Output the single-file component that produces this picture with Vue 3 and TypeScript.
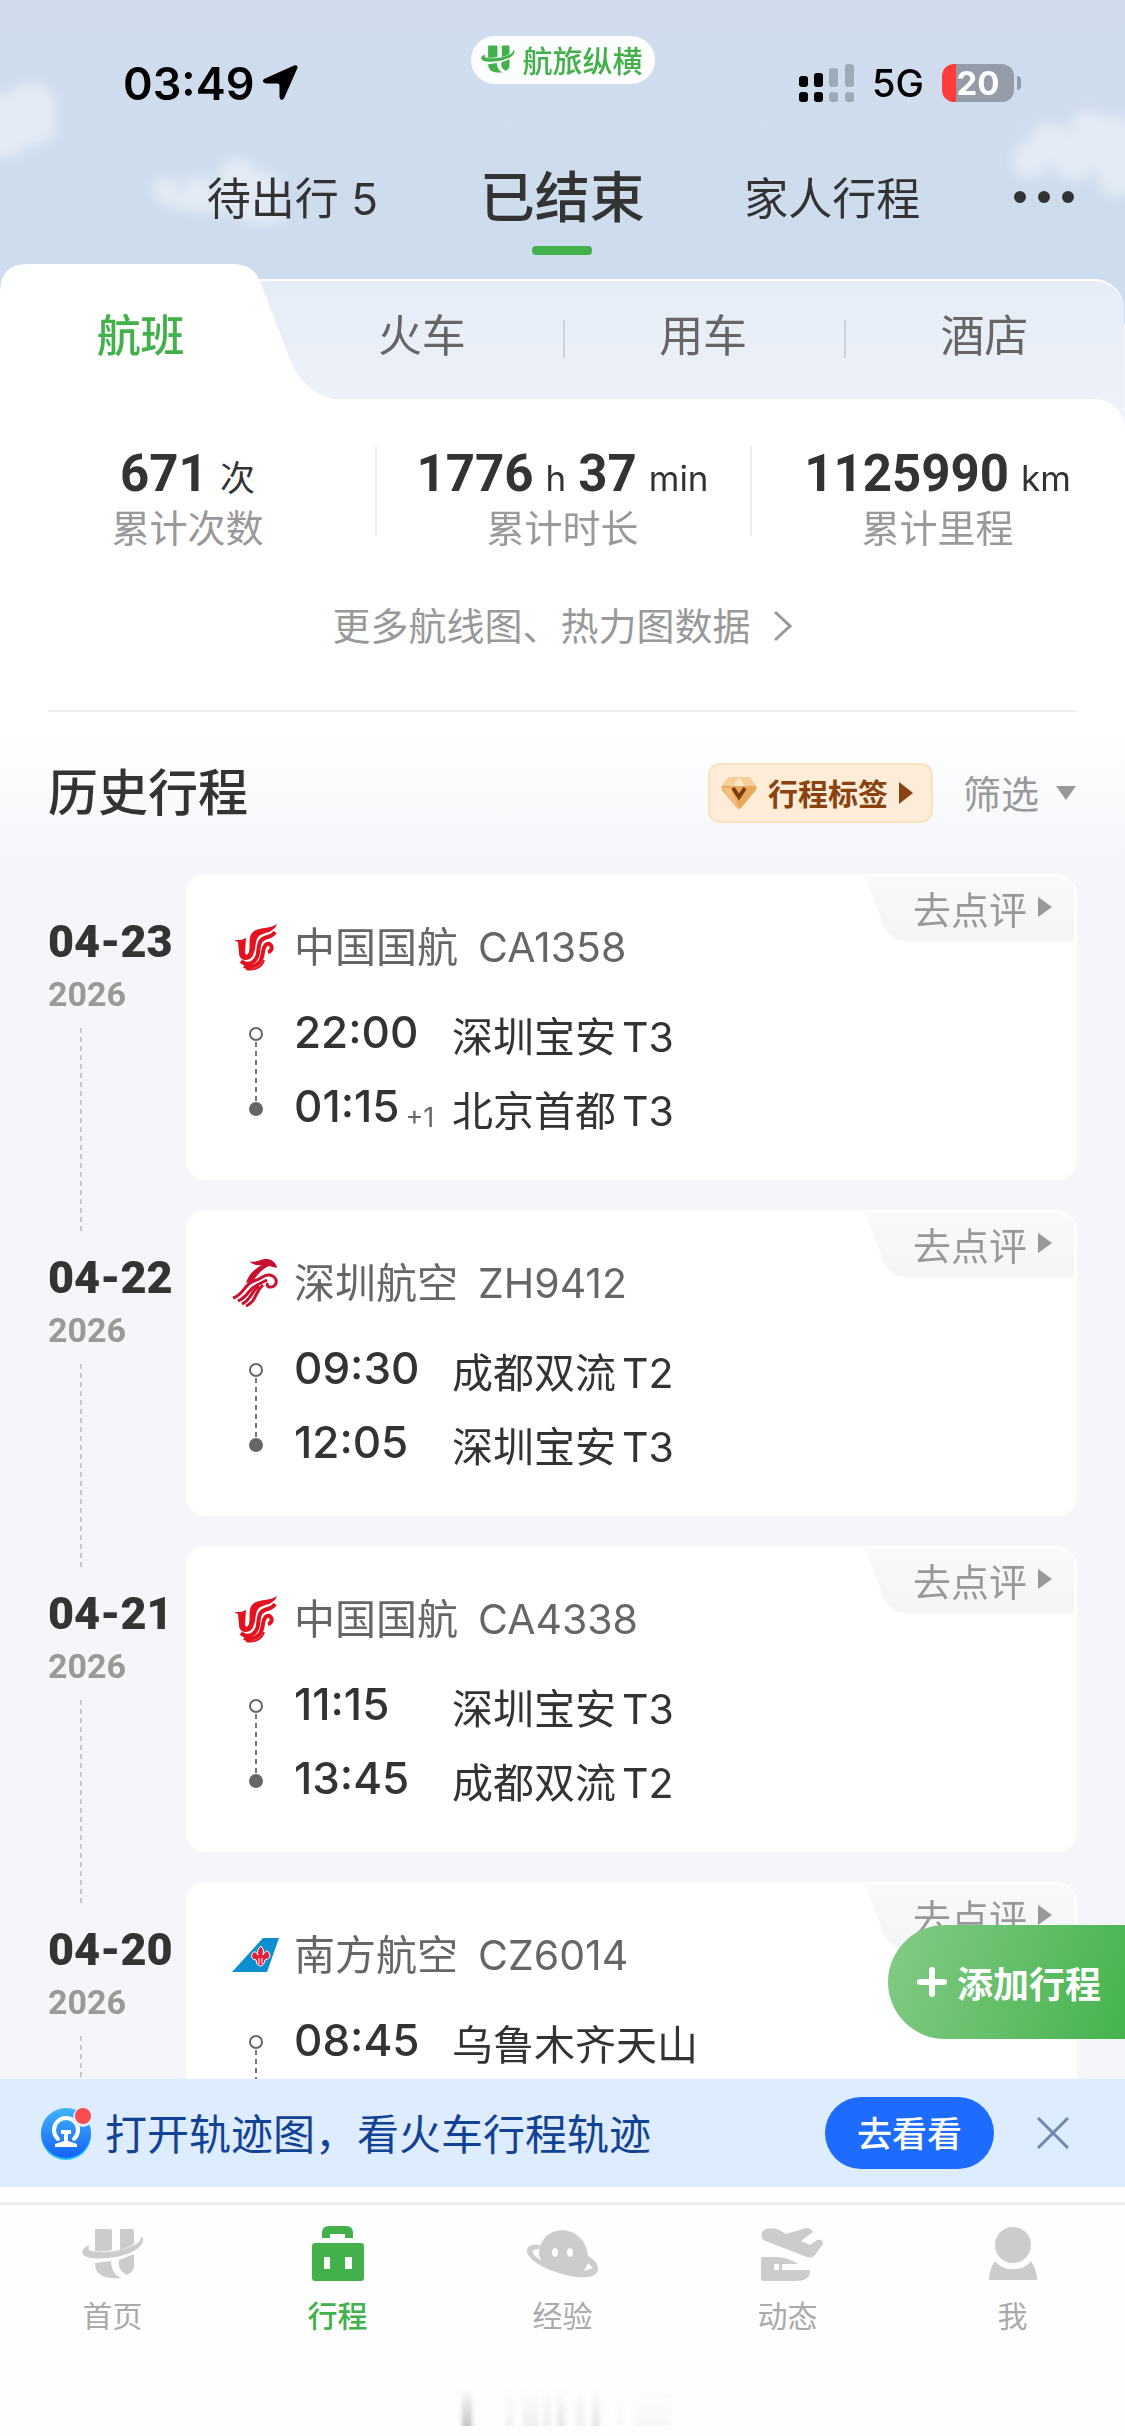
<script setup lang="ts">
interface Leg {
  time: string
  plus?: string
  place: string
  terminal?: string
}
interface Trip {
  date: string
  year: string
  logo: 'ca' | 'zh' | 'cz'
  airline: string
  flight: string
  legs: Leg[]
}

const kinds: string[] = ['航班', '火车', '用车', '酒店']

const trips: Trip[] = [
  {
    date: '04-23', year: '2026', logo: 'ca', airline: '中国国航', flight: 'CA1358',
    legs: [
      { time: '22:00', place: '深圳宝安', terminal: 'T3' },
      { time: '01:15', plus: '+1', place: '北京首都', terminal: 'T3' },
    ],
  },
  {
    date: '04-22', year: '2026', logo: 'zh', airline: '深圳航空', flight: 'ZH9412',
    legs: [
      { time: '09:30', place: '成都双流', terminal: 'T2' },
      { time: '12:05', place: '深圳宝安', terminal: 'T3' },
    ],
  },
  {
    date: '04-21', year: '2026', logo: 'ca', airline: '中国国航', flight: 'CA4338',
    legs: [
      { time: '11:15', place: '深圳宝安', terminal: 'T3' },
      { time: '13:45', place: '成都双流', terminal: 'T2' },
    ],
  },
  {
    date: '04-20', year: '2026', logo: 'cz', airline: '南方航空', flight: 'CZ6014',
    legs: [{ time: '08:45', place: '乌鲁木齐天山' }],
  },
]
</script>

<template>
  <div class="page">
    <header class="top">
      <svg class="clouds" viewBox="0 0 1125 324" preserveAspectRatio="xMidYMin slice" aria-hidden="true">
        <defs>
          <filter id="soft" x="-30%" y="-30%" width="160%" height="160%"><feGaussianBlur stdDeviation="6" /></filter>
        </defs>
        <g fill="#fff" filter="url(#soft)">
          <g opacity=".42">
            <circle cx="32" cy="106" r="24" /><circle cx="10" cy="120" r="28" /><circle cx="36" cy="126" r="20" />
            <ellipse cx="0" cy="146" rx="26" ry="12" />
          </g>
          <g opacity=".42">
            <circle cx="166" cy="190" r="13" /><circle cx="198" cy="192" r="16" /><circle cx="238" cy="178" r="20" />
            <circle cx="264" cy="190" r="18" /><ellipse cx="216" cy="202" rx="54" ry="10" /><ellipse cx="262" cy="216" rx="24" ry="8" />
          </g>
          <g opacity=".42">
            <circle cx="1088" cy="128" r="18" /><circle cx="1050" cy="142" r="20" /><circle cx="1112" cy="146" r="30" />
            <circle cx="1030" cy="160" r="18" /><circle cx="1074" cy="156" r="24" /><circle cx="1118" cy="176" r="20" />
          </g>
        </g>
      </svg>

      <div class="status">
        <div class="clock">
          <span>03:49</span>
          <svg width="36" height="36" viewBox="0 0 36 36" aria-hidden="true">
            <path d="M32 .6Q36 -.6 35.400 3L22 33.500Q18.500 37 17.500 32V20.500Q17.400 18.500 15.500 18.500H4Q-1 17.500 2 14Z" fill="#000" />
          </svg>
        </div>
        <div class="brand">
          <svg width="34" height="28" viewBox="0 0 62 51" fill="#43b14b" aria-hidden="true">
            <path d="M13 1h15q2 0 2 2v19q-8 2-17 1zM38 1h12q2 0 2 2v13q-6 4-14 6z" />
            <path d="M8 17C-2 20-3 29 10 30C30 32 58 26 61 13Q62 10 59 9Q59 15 50 18C38 24 20 25 10 23Q4 21 8 17Z" />
            <path d="M13 35l16-2C29 42 34 49 40 50C26 51 13 49 13 35ZM37 32l15-6v12q0 6-7 9C39 44 36 40 37 32Z" />
          </svg>
          <span>航旅纵横</span>
        </div>
        <div class="signal">
          <svg width="55" height="38" viewBox="0 0 55 38" aria-hidden="true">
            <rect x="0" y="12" width="9" height="11" rx="3" /><rect x="15" y="9" width="9" height="14" rx="3" />
            <rect x="0" y="28" width="9" height="10" rx="3" /><rect x="15" y="28" width="9" height="10" rx="3" />
            <g fill="#9faab9"><rect x="30" y="4" width="9" height="19" rx="3" /><rect x="46" y="0" width="9" height="23" rx="3" />
              <rect x="30" y="28" width="9" height="10" rx="3" /><rect x="46" y="28" width="9" height="10" rx="3" /></g>
          </svg>
          <span class="net">5G</span>
          <span class="battery">20</span>
        </div>
      </div>

      <nav class="nav">
        <a href="#upcoming">待出行 5</a>
        <a href="#done" class="on">已结束</a>
        <a href="#family">家人行程</a>
        <button type="button" class="dots" aria-label="更多">
          <svg width="62" height="14" viewBox="0 0 62 14" fill="#333"><circle cx="7" cy="7" r="6" /><circle cx="31" cy="7" r="6" /><circle cx="55" cy="7" r="6" /></svg>
        </button>
      </nav>
    </header>

    <main class="sheet">
      <div class="kinds">
        <svg class="bump" viewBox="0 0 345 135" preserveAspectRatio="none" aria-hidden="true">
          <path d="M0 136V28Q0 0 28 0H234Q253 0 260 18L289 93Q306 135 345 135V136Z" fill="#fff" />
        </svg>
        <button v-for="(k, i) in kinds" :key="k" type="button" :class="{ on: i === 0, bar: i > 1 }">{{ k }}</button>
      </div>

      <div class="body">
        <section class="stats">
          <div class="stat"><p><b>671</b><span>次</span></p><small>累计次数</small></div>
          <div class="stat"><p><b>1776</b><span>h</span><b>37</b><span>min</span></p><small>累计时长</small></div>
          <div class="stat"><p><b>1125990</b><span>km</span></p><small>累计里程</small></div>
        </section>
        <a href="#map" class="more">
          更多航线图、热力图数据
          <svg width="20" height="32" viewBox="0 0 20 32" fill="none" stroke="#999" stroke-width="3"><path d="M2 2l15 14L2 30" /></svg>
        </a>

        <div class="head">
          <h2>历史行程</h2>
          <button type="button" class="tag">
            <svg width="36" height="34" viewBox="0 0 36 34" aria-hidden="true">
              <path d="M8 1H28L35 10Q36 12 35 14L20 32Q18 34 16 32L1 14Q0 12 1 10Z" fill="#e9a85a" />
              <path d="M8 1H28L35 10H1Z" fill="#f6cf98" /><path d="M12 10L18 1l6 9z" fill="#fde6c4" />
              <path d="M1 12L10 12L18 33L16 32Z" fill="#f3bf7c" />
              <path d="M12 12l6 9 6-9" fill="none" stroke="#7a3c10" stroke-width="4" />
            </svg>
            <span>行程标签</span>
            <svg width="14" height="22" viewBox="0 0 14 22" aria-hidden="true"><path d="M0 0L14 11L0 22Z" fill="#8a4310" /></svg>
          </button>
          <button type="button" class="filter">
            <span>筛选</span>
            <svg width="22" height="14" viewBox="0 0 22 14" aria-hidden="true"><path d="M1 0H21L11 14Z" fill="#999" /></svg>
          </button>
        </div>
      </div>

      <section class="list">
        <article v-for="t in trips" :key="t.date" class="trip">
          <div class="when">
            <strong>{{ t.date }}</strong>
            <span>{{ t.year }}</span>
            <i></i>
          </div>
          <div class="card">
            <a href="#review" class="review">
              <svg viewBox="0 0 212 64" aria-hidden="true">
                <defs><linearGradient id="rv" x1="0" y1="0" x2="0" y2="1"><stop offset="0" stop-color="#f8f9fb" /><stop offset="1" stop-color="#f4f5f7" /></linearGradient></defs>
                <path d="M0 0H198Q212 0 212 14V64H44Q29 64 21 48L8 12Q5 3 0 0Z" fill="url(#rv)" />
              </svg>
              <span>去点评</span>
              <svg class="arrow" width="14" height="20" viewBox="0 0 14 20" aria-hidden="true"><path d="M0 0L14 10L0 20Z" fill="#999" /></svg>
            </a>

            <div class="airline">
              <svg v-if="t.logo === 'ca'" width="48" height="48" viewBox="0 0 48 48" fill="none" stroke="#e0131f" aria-hidden="true">
                <path d="M45 1C42 10 32 9 27 13C22 18 25 26 20 34C16 39 7 38 7 30L6 19L2 17L9 17L14 15L13 30Q15 34 17 29C19 20 15 14 22 8C29 4 38 6 45 1Z" fill="#e0131f" stroke="none" />
                <path d="M43 9C39 16 32 12 28 19C25 27 28 34 21 39C17 42 12 41 9 38" stroke-width="4" />
                <path d="M36 29C42 28 40 19 35 21C29 24 33 33 27 40C23 44 16 45 12 43" stroke-width="4" />
                <path d="M32 37C30 44 23 48 14 46" stroke-width="2" />
              </svg>
              <svg v-else-if="t.logo === 'zh'" width="48" height="48" viewBox="0 0 48 48" aria-hidden="true">
                <path d="M17 2C24 5 28-1 36 0Q44 2 45 9L37 7C30 10 26 15 21 22L14 24C17 14 24 9 30 6C24 7 20 5 17 2Z" fill="#c8102e" />
                <g fill="none" stroke="#c8102e" stroke-width="3">
                  <path d="M1 39C12 36 12 25 22 22C30 20 31 15 38 16C47 18 46 29 37 28Q34 27 36 24" />
                  <path d="M6 42C17 37 16 30 25 26L35 21" /><path d="M10 45C20 40 19 32 27 27" /><path d="M14 47C25 42 22 34 31 26" />
                </g>
              </svg>
              <svg v-else width="48" height="48" viewBox="0 0 48 48" aria-hidden="true">
                <path d="M0 41L31 7H47L35 41Z" fill="#0b8fd0" />
                <g fill="#e2203a" stroke="#fff" stroke-width="1">
                  <path d="M29 15Q33 19 31 24Q35 17 37 22Q40 27 33 29Q32 35 28 35Q24 34 24 29Q18 28 20 23Q23 18 26 24Q24 19 29 15Z" />
                </g>
                <path d="M27 27V33M30 27V33" stroke="#fff" stroke-width="1" />
              </svg>
              <span>{{ t.airline }}</span>
              <span class="flight">{{ t.flight }}</span>
            </div>

            <div class="route">
              <svg width="48" height="148" viewBox="0 0 48 148" aria-hidden="true">
                <circle cx="24" cy="34" r="6" fill="none" stroke="#666" stroke-width="2" />
                <path d="M24 42V102" stroke="#777" stroke-width="2" stroke-dasharray="5 4" />
                <circle cx="24" cy="109" r="7" fill="#666" />
              </svg>
              <div class="legs">
                <div v-for="l in t.legs" :key="l.time" class="leg">
                  <time>{{ l.time }}<sub v-if="l.plus">{{ l.plus }}</sub></time>
                  <span class="place">{{ l.place }}</span>
                  <span v-if="l.terminal">{{ l.terminal }}</span>
                </div>
              </div>
            </div>
          </div>
        </article>
        <button type="button" class="add">
          <svg width="30" height="30" viewBox="0 0 30 30" aria-hidden="true"><path d="M15 3V27M3 15H27" stroke="#fff" stroke-width="6" stroke-linecap="round" /></svg>
          添加行程
        </button>
      </section>
    </main>

    <aside class="banner">
      <svg width="56" height="56" viewBox="0 0 56 56" aria-hidden="true">
        <defs><linearGradient id="bl" x1="0" y1="0" x2="0" y2="1"><stop offset="0" stop-color="#41b4fb" /><stop offset="1" stop-color="#1561f8" /></linearGradient></defs>
        <circle cx="26" cy="30" r="25" fill="#1fc4fb" /><circle cx="26" cy="28" r="25" fill="url(#bl)" />
        <path d="M18 34A12 12 0 1 1 34 34" fill="none" stroke="#fff" stroke-width="4" stroke-linecap="round" />
        <path d="M24 14V11H28V14ZM21 25H31V29H28V36L37 39V42H15V39L24 36V29H21Z" fill="#fff" />
        <circle cx="43" cy="12" r="10" fill="#deecff" /><circle cx="43" cy="11" r="8" fill="#f74d50" />
      </svg>
      <p>打开轨迹图，看火车行程轨迹</p>
      <button type="button" class="go">去看看</button>
      <button type="button" class="close" aria-label="关闭">
        <svg width="32" height="32" viewBox="0 0 32 32" stroke="#6d88b0" stroke-width="3"><path d="M1 1L31 31M31 1L1 31" /></svg>
      </button>
    </aside>

    <footer class="tabs">
      <nav>
        <a href="#home">
          <svg width="62" height="56" viewBox="0 -2 62 56" aria-hidden="true">
            <path d="M13 1h15q2 0 2 2v19q-8 2-17 1zM38 1h12q2 0 2 2v13q-6 4-14 6z" />
            <path d="M8 17C-2 20-3 29 10 30C30 32 58 26 61 13Q62 10 59 9Q59 15 50 18C38 24 20 25 10 23Q4 21 8 17Z" />
            <path d="M13 35l16-2C29 42 34 49 40 50C26 51 13 49 13 35ZM37 32l15-6v12q0 6-7 9C39 44 36 40 37 32Z" />
          </svg>
          首页
        </a>
        <a href="#trips" class="on">
          <svg width="52" height="56" viewBox="0 0 52 56" fill-rule="evenodd" aria-hidden="true">
            <path d="M10 12V7Q10 0 17 0H34Q41 0 41 7V12H33V8H18V12ZM3 17H49Q52 17 52 20V52Q52 55 49 55H3Q0 55 0 52V20Q0 17 3 17ZM12 31V43H18V31ZM33 31V43H40V31Z" />
          </svg>
          行程
        </a>
        <a href="#tips">
          <svg width="72" height="56" viewBox="0 -4 72 56" fill-rule="evenodd" aria-hidden="true">
            <path d="M12 25C12-8 58-8 61 26C66 29 71 33 71 39C71 46 62 48 50 47C30 45 0 32 0 21C0 15 6 14 13 15L12 19C6 19 4 21 7 25L14 31ZM28 18C24 18 24 27 28 27S32 18 28 18ZM43 18C39 18 39 27 43 27S47 18 43 18ZM57 41L66 38L61 33Z" />
          </svg>
          经验
        </a>
        <a href="#news">
          <svg width="70" height="56" viewBox="-8 -2 70 56" fill-rule="evenodd" aria-hidden="true">
            <path d="M2 12Q-2 4 5 1Q13-1 18 2L25 6L45 0Q50 0 52 4L40 13L49 17L56 12Q62 11 62 16L54 27Q51 31 46 29Z" />
            <path d="M0 31Q0 29 2 29H16Q26 29 37 36H21V42H49Q50 53 34 53H2Q0 53 0 51ZM13 36V42H18V36Z" />
          </svg>
          动态
        </a>
        <a href="#me">
          <svg width="48" height="56" viewBox="0 -1 48 56" aria-hidden="true">
            <circle cx="24" cy="18" r="18" /><path d="M6 34C14 45 34 45 42 34Q48 43 48 53H0Q0 43 6 34Z" />
          </svg>
          我
        </a>
      </nav>
      <svg class="ghost" width="220" height="40" viewBox="0 0 220 40" aria-hidden="true">
        <defs>
          <linearGradient id="fade" x1="0" y1="0" x2="0" y2="1"><stop offset="0" stop-color="#888" stop-opacity="0" /><stop offset="1" stop-color="#888" stop-opacity=".5" /></linearGradient>
          <filter id="haze" x="-10%" y="0" width="120%" height="100%"><feGaussianBlur stdDeviation="2 0" /></filter>
        </defs>
        <g fill="url(#fade)" filter="url(#haze)">
          <rect x="9" width="10" height="38" /><g opacity=".25"><rect x="54" width="6" height="38" /><rect x="70" width="16" height="38" /><rect x="90" width="8" height="38" /><rect x="122" width="9" height="38" /></g>
          <g opacity=".4"><rect x="104" width="8" height="38" /><rect x="139" width="8" height="38" /></g>
          <g opacity=".12"><rect x="164" width="7" height="38" /><rect x="182" width="8" height="38" /><rect x="190" width="28" height="38" /></g>
        </g>
      </svg>
    </footer>
  </div>
</template>

<style>
body {
  margin: 0;
}
</style>

<style scoped>
.page {
  display: flex;
  flex-direction: column;
  height: 100vh;
  overflow: hidden;
  background: #f4f6fa;
  color: #333;
  font-family: Inter, "Noto Sans CJK SC", sans-serif;
}
.page * {
  box-sizing: border-box;
}
a {
  color: inherit;
  text-decoration: none;
}
button {
  margin: 0;
  padding: 0;
  border: 0;
  background: none;
  color: inherit;
  font: inherit;
}
p,
h2 {
  margin: 0;
}
svg {
  flex: none;
  display: block;
}

/* sky header */
.top {
  position: relative;
  flex: none;
  margin-bottom: -60px;
  padding: 36px 0 60px;
  background: linear-gradient(#d0dced, #cdddee 80%, #d0dcee);
}
.clouds {
  position: absolute;
  inset: 0;
  width: 100%;
  height: 100%;
}
.status {
  position: relative;
  display: grid;
  grid-template-columns: 1fr auto 1fr;
  color: #000;
}
.clock,
.signal {
  display: flex;
  align-items: center;
  height: 94px;
}
.clock {
  padding-left: 123px;
  gap: 8px;
  font-size: 45px;
  font-weight: 600;
}
.brand {
  display: flex;
  align-items: center;
  gap: 8px;
  height: 48px;
  padding: 0 12px 2px 10px;
  border-radius: 24px;
  background: #fcfefe;
  color: #43b14b;
  font-size: 30px;
  font-weight: 500;
}
.signal {
  justify-content: flex-end;
  padding-right: 111px;
}
.net {
  margin: 0 18px;
  font-size: 38px;
  font-weight: 500;
}
.battery {
  position: relative;
  width: 72px;
  border-radius: 12px;
  background: linear-gradient(90deg, #ff3b3c 14px, #959ca9 14px);
  color: #fff;
  font-size: 33px;
  font-weight: 700;
  line-height: 38px;
  text-align: center;
}
.battery::after {
  content: "";
  position: absolute;
  top: 12px;
  right: -7px;
  width: 4px;
  height: 14px;
  border-radius: 0 4px 4px 0;
  background: #959ca9;
}
.nav {
  position: relative;
  display: grid;
  grid-template-columns: 270fr 270fr 270fr 158fr;
  align-items: center;
  height: 134px;
  padding-left: 14%;
  font-size: 44px;
  text-align: center;
}
.nav a {
  padding-bottom: 3px;
  white-space: nowrap;
}
.nav .on {
  position: relative;
  padding: 0;
  font-size: 55px;
  font-weight: 500;
  line-height: 134px;
}
.nav .on::after {
  content: "";
  position: absolute;
  bottom: 9px;
  left: calc(50% - 30px);
  width: 60px;
  height: 9px;
  border-radius: 4px;
  background: #43b14b;
}
.dots {
  display: flex;
  justify-content: center;
  padding-right: 4px;
}

/* trip kinds */
.sheet {
  position: relative;
  display: flex;
  flex: 1;
  flex-direction: column;
  min-height: 0;
}
.sheet::before {
  content: "";
  position: absolute;
  top: 15px;
  left: 0;
  right: 1px;
  height: 180px;
  border-top: 2px solid #fff;
  border-radius: 30px;
  background: linear-gradient(#e6edf6, #edf1fa 70%);
}
.kinds {
  position: relative;
  display: grid;
  grid-template-columns: repeat(4, 1fr);
  flex: none;
  height: 135px;
}
.bump {
  position: absolute;
  left: 0;
  top: 0;
  width: 30.7%;
  height: 136px;
}
.kinds button {
  position: relative;
  padding-top: 2px;
  color: #666;
  font-size: 44px;
}
.kinds .on {
  color: #43b14b;
  font-weight: 500;
}
.bar::before {
  content: "";
  position: absolute;
  left: 0;
  top: 56px;
  width: 2px;
  height: 38px;
  background: #cdd2da;
}
.body {
  position: relative;
  flex: none;
  border-radius: 0 30px 0 0;
  background: linear-gradient(#fff 330px, #f4f6fa 460px);
}

/* totals */
.stats {
  display: grid;
  grid-template-columns: repeat(3, 1fr);
  padding-top: 47px;
}
.stat {
  position: relative;
  text-align: center;
}
.stat + .stat::before {
  content: "";
  position: absolute;
  left: 0;
  top: 0;
  width: 2px;
  height: 90px;
  background: #eee;
}
.stat p {
  display: flex;
  justify-content: center;
  align-items: baseline;
  gap: 12px;
  line-height: 56px;
}
.stat b {
  font-family: Roboto, sans-serif;
  font-size: 51px;
}
.stat span {
  font-size: 35px;
}
.stat small {
  display: block;
  color: #999;
  font-size: 38px;
  line-height: 44px;
}
.more {
  display: flex;
  justify-content: center;
  align-items: center;
  gap: 22px;
  margin: 52px 48px 0;
  padding-bottom: 60px;
  border-bottom: 2px solid #efefef;
  color: #999;
  font-size: 38px;
  line-height: 48px;
}

/* history */
.head {
  display: flex;
  align-items: center;
  height: 162px;
  padding: 0 48px;
}
h2 {
  flex: 1;
  padding-bottom: 8px;
  font-size: 50px;
  font-weight: 500;
}
.tag {
  display: flex;
  align-items: center;
  gap: 11px;
  height: 60px;
  padding: 0 18px 0 11px;
  border: 2px solid #fbe2bf;
  border-radius: 12px;
  background: #fdecd7;
  color: #8a4310;
  font-size: 30px;
  font-weight: 700;
}
.tag span {
  padding-bottom: 2px;
}
.filter {
  display: flex;
  align-items: center;
  gap: 16px;
  margin-left: 30px;
  color: #999;
  font-size: 38px;
}
.filter span {
  padding-bottom: 4px;
}
.list {
  position: relative;
  flex: 1;
  min-height: 0;
  overflow: hidden;
  padding: 0 48px;
}
.trip {
  display: grid;
  grid-template-columns: 138px 1fr;
  padding-bottom: 30px;
}
.when {
  display: flex;
  flex-direction: column;
  padding-top: 42px;
  font-family: Roboto, sans-serif;
  font-weight: 700;
}
.when strong {
  font-size: 45px;
  line-height: 52px;
}
.when span {
  margin-top: 6px;
  color: #999;
  font-size: 34px;
  line-height: 40px;
}
.when i {
  flex: 1;
  width: 2px;
  margin: 14px 0 -54px 32px;
  background: repeating-linear-gradient(#c8c8c8 0 5px, transparent 5px 9px);
}
.card {
  position: relative;
  height: 306px;
  padding: 45px 0 32px 46px;
  border-radius: 20px;
  background: #fff;
}
.review {
  position: absolute;
  top: 3px;
  right: 3px;
  display: flex;
  align-items: center;
  gap: 11px;
  height: 64px;
  padding: 0 22px 4px 50px;
  color: #999;
  font-size: 38px;
}
.review svg:first-child {
  position: absolute;
  right: 0;
  top: 0;
  width: 212px;
  height: 64px;
}
.review span,
.arrow {
  position: relative;
}
.airline {
  display: flex;
  align-items: center;
  gap: 14px;
  color: #666;
  font-size: 41px;
  line-height: 56px;
}
.flight {
  margin-left: 6px;
}
.route {
  display: flex;
  gap: 14px;
  padding-top: 25px;
}
.leg {
  display: flex;
  align-items: flex-start;
  gap: 6px;
  font-size: 41px;
  line-height: 74px;
}
time {
  width: 152px;
  font-size: 44px;
  font-weight: 500;
  line-height: 64px;
  white-space: nowrap;
}
sub {
  margin-left: 6px;
  color: #666;
  font-size: 27px;
  font-weight: 400;
  line-height: 1;
  vertical-align: -5px;
}
.add {
  position: absolute;
  right: 0;
  bottom: 40px;
  display: flex;
  align-items: center;
  gap: 10px;
  height: 114px;
  padding: 0 24px 0 29px;
  border-radius: 57px 0 0 57px;
  background: linear-gradient(110deg, #85cb86, #44b34e);
  color: #fff;
  font-size: 36px;
  font-weight: 700;
}

/* banner */
.banner {
  display: flex;
  align-items: center;
  flex: none;
  height: 108px;
  margin-bottom: 15px;
  padding: 0 56px 0 40px;
  background: #deecff;
  color: #124294;
}
.banner p {
  flex: 1;
  margin-left: 9px;
  padding-bottom: 3px;
  font-size: 42px;
}
.go {
  width: 169px;
  height: 72px;
  padding-bottom: 3px;
  border-radius: 36px;
  background: #1e6bff;
  color: #fff;
  font-size: 35px;
  font-weight: 500;
}
.close {
  margin-left: 43px;
}

/* bottom tabs */
.tabs {
  flex: none;
  height: 234px;
  border-top: 3px solid #eee;
  background: #fefefe;
  box-shadow: 0 -15px #fdfdfd;
}
.tabs nav {
  display: grid;
  grid-template-columns: repeat(5, 1fr);
  padding-top: 21px;
}
.tabs a {
  display: flex;
  flex-direction: column;
  align-items: center;
  gap: 13px;
  color: #aaa;
  font-size: 30px;
  line-height: 42px;
}
.tabs a svg {
  fill: #ccc;
}
.tabs .on {
  color: #43b14b;
  font-weight: 500;
}
.tabs .on svg {
  fill: #43b14b;
}
.ghost {
  margin: 51px auto 0;
}
</style>
